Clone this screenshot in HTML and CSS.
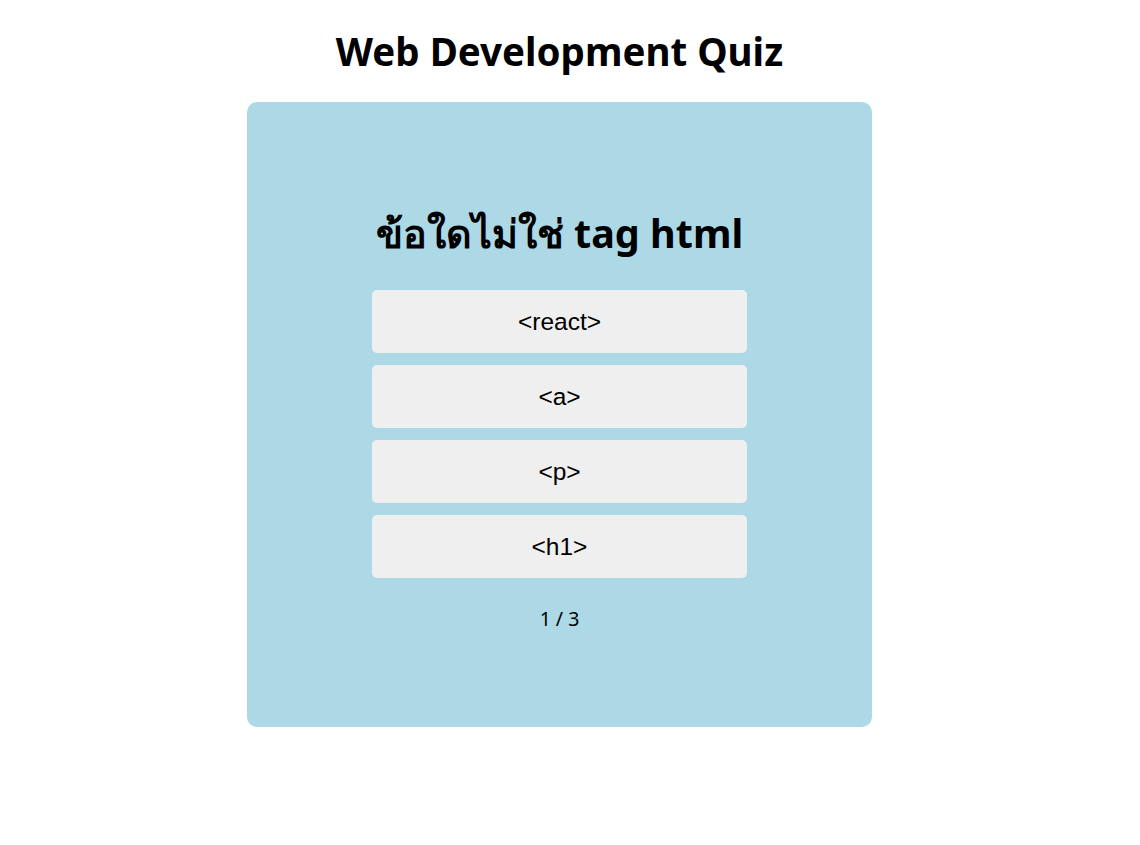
FILE: index.html
```html
<!DOCTYPE html>
<html lang="th">
<head>
<meta charset="utf-8">
<title>Web Development Quiz</title>
<link rel="stylesheet" href="styles.css">
</head>
<body>
<main class="page">
  <h1 class="title">Web Development Quiz</h1>
  <section class="card">
    <h2 class="question">ข้อใดไม่ใช่ tag html</h2>
    <div class="options">
      <button class="option">&lt;react&gt;</button>
      <button class="option">&lt;a&gt;</button>
      <button class="option">&lt;p&gt;</button>
      <button class="option">&lt;h1&gt;</button>
    </div>
    <p class="progress">1 / 3</p>
  </section>
</main>
</body>
</html>
```
FILE: styles.css
```css
html, body {
  margin: 0;
  padding: 0;
  background: #fff;
}
body {
  font-family: "Noto Sans", "Open Sans", sans-serif;
  color: #000;
}
.page {
  display: flex;
  flex-direction: column;
  align-items: center;
  padding-right: 21px;
}
.title {
  margin: 25px 0 0;
  height: 77px;
  font-size: 38.5px;
  font-weight: 700;
  line-height: 52px;
}
.card {
  box-sizing: border-box;
  width: 625px;
  height: 625px;
  background: #add8e6;
  border-radius: 10px;
  display: flex;
  flex-direction: column;
  align-items: center;
  padding-top: 106px;
}
.question {
  margin: 0 0 32px;
  font-size: 39.5px;
  font-weight: 700;
  line-height: 50px;
}
.options {
  display: flex;
  flex-direction: column;
  gap: 12px;
  width: 375px;
}
.option {
  height: 63px;
  border: none;
  border-radius: 5px;
  background: #efefef;
  font-family: "Liberation Sans", Arial, sans-serif;
  font-size: 24.5px;
  color: #000;
  cursor: pointer;
}
.progress {
  margin: 29px 0 0;
  font-size: 19.5px;
  line-height: 24px;
}
```
